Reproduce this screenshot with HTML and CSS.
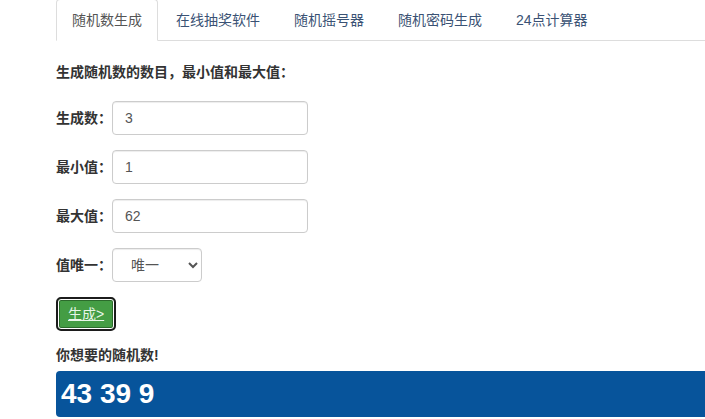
FILE: index.html
```html
<!DOCTYPE html>
<html>
    <head>
        <title>随机数生成</title>
        <link rel="stylesheet" href="styles.css">
    </head>
    <body>
        <div class="page">
            <ul class="tabs">
                <li class="tab active"><a href="#">随机数生成</a></li>
                <li class="tab"><a href="#">在线抽奖软件</a></li>
                <li class="tab"><a href="#">随机摇号器</a></li>
                <li class="tab"><a href="#">随机密码生成</a></li>
                <li class="tab"><a href="#">24点计算器</a></li>
            </ul>

            <form class="gen-form">
                <p class="title">生成随机数的数目，最小值和最大值：</p>

                <div class="row">
                    <label for="count">生成数：</label>
                    <input type="text" id="count" class="field" value="3">
                </div>
                <div class="row">
                    <label for="min">最小值：</label>
                    <input type="text" id="min" class="field" value="1">
                </div>
                <div class="row">
                    <label for="max">最大值：</label>
                    <input type="text" id="max" class="field" value="62">
                </div>
                <div class="row">
                    <label for="unique">值唯一：</label>
                    <select id="unique" class="pick">
                        <option value="1">唯一</option>
                        <option value="0">可重复</option>
                    </select>
                </div>

                <button type="button" class="go"><span>生成&gt;</span></button>

                <p class="title result-title">你想要的随机数!</p>
                <div class="result">43 39 9</div>
            </form>
        </div>
    </body>
</html>
```

FILE: styles.css
```css
html {
    overflow: hidden;
}
body {
    margin: 0;
    font-family: "Liberation Sans", "Noto Sans CJK SC", sans-serif;
    font-size: 14px;
    line-height: 20px;
    color: #333;
    background-color: #fff;
}
.page {
    margin-left: 56px;
    width: 760px;
}
.tabs {
    display: flex;
    list-style: none;
    margin: -1px 0 0;
    padding: 0;
    border-bottom: 1px solid #ddd;
}
.tab {
    margin-right: 2px;
    margin-bottom: -1px;
}
.tab a {
    display: block;
    padding: 10px 15px;
    border: 1px solid transparent;
    border-radius: 4px 4px 0 0;
    color: #3a5274;
    text-decoration: none;
}
.tab.active a {
    color: #555;
    background-color: #fff;
    border-color: #ddd #ddd transparent;
}
.title {
    margin: 21px 0 19px;
    font-weight: bold;
}
.row {
    display: flex;
    align-items: center;
    margin-bottom: 15px;
}
.row label {
    width: 56px;
    font-weight: bold;
}
.field,
.pick {
    height: 34px;
    box-sizing: border-box;
    padding: 6px 12px;
    font-family: inherit;
    font-size: 14px;
    color: #555;
    background-color: #fff;
    border: 1px solid #ccc;
    border-radius: 4px;
    box-shadow: inset 0 1px 1px rgba(0, 0, 0, 0.075);
}
.field {
    width: 196px;
}
.pick {
    width: 90px;
    padding: 6px 8px 6px 14px;
}
.go {
    display: block;
    padding: 5px 10px;
    font-family: inherit;
    font-size: 14px;
    line-height: 20px;
    color: #e8f6e8;
    background-color: #449d44;
    border: 2px solid #1c1c1c;
    border-radius: 5px;
    box-shadow: inset 0 0 0 1px #fff, inset 0 0 0 2px #2b6a2b;
    cursor: pointer;
}
.go span {
    text-decoration: underline;
}
.result-title {
    margin: 14px 0 6px;
}
.result {
    height: 46px;
    padding-left: 5px;
    font-size: 28px;
    line-height: 46px;
    font-weight: bold;
    color: #fff;
    background-color: #07549b;
    border-radius: 4px;
}
```
